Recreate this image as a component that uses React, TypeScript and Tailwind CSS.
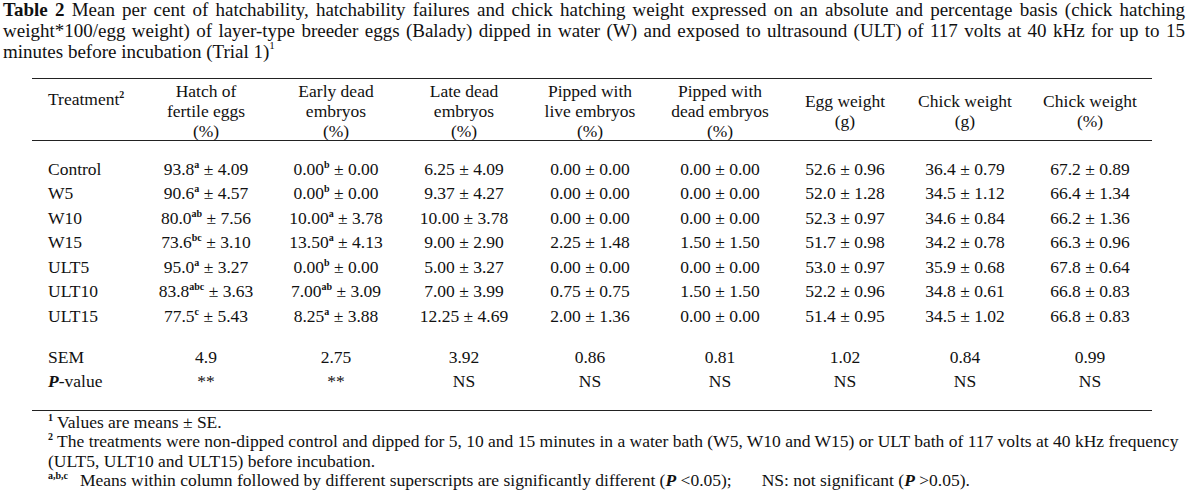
import React from "react";

type Cell = { v: string; s?: string; e: string };

const c = (v: string, e: string, s?: string): Cell => ({ v, e, s });

const rows: { name: string; cells: Cell[] }[] = [
  {
    name: "Control",
    cells: [
      c("93.8", "4.09", "a"),
      c("0.00", "0.00", "b"),
      c("6.25", "4.09"),
      c("0.00", "0.00"),
      c("0.00", "0.00"),
      c("52.6", "0.96"),
      c("36.4", "0.79"),
      c("67.2", "0.89"),
    ],
  },
  {
    name: "W5",
    cells: [
      c("90.6", "4.57", "a"),
      c("0.00", "0.00", "b"),
      c("9.37", "4.27"),
      c("0.00", "0.00"),
      c("0.00", "0.00"),
      c("52.0", "1.28"),
      c("34.5", "1.12"),
      c("66.4", "1.34"),
    ],
  },
  {
    name: "W10",
    cells: [
      c("80.0", "7.56", "ab"),
      c("10.00", "3.78", "a"),
      c("10.00", "3.78"),
      c("0.00", "0.00"),
      c("0.00", "0.00"),
      c("52.3", "0.97"),
      c("34.6", "0.84"),
      c("66.2", "1.36"),
    ],
  },
  {
    name: "W15",
    cells: [
      c("73.6", "3.10", "bc"),
      c("13.50", "4.13", "a"),
      c("9.00", "2.90"),
      c("2.25", "1.48"),
      c("1.50", "1.50"),
      c("51.7", "0.98"),
      c("34.2", "0.78"),
      c("66.3", "0.96"),
    ],
  },
  {
    name: "ULT5",
    cells: [
      c("95.0", "3.27", "a"),
      c("0.00", "0.00", "b"),
      c("5.00", "3.27"),
      c("0.00", "0.00"),
      c("0.00", "0.00"),
      c("53.0", "0.97"),
      c("35.9", "0.68"),
      c("67.8", "0.64"),
    ],
  },
  {
    name: "ULT10",
    cells: [
      c("83.8", "3.63", "abc"),
      c("7.00", "3.09", "ab"),
      c("7.00", "3.99"),
      c("0.75", "0.75"),
      c("1.50", "1.50"),
      c("52.2", "0.96"),
      c("34.8", "0.61"),
      c("66.8", "0.83"),
    ],
  },
  {
    name: "ULT15",
    cells: [
      c("77.5", "5.43", "c"),
      c("8.25", "3.88", "a"),
      c("12.25", "4.69"),
      c("2.00", "1.36"),
      c("0.00", "0.00"),
      c("51.4", "0.95"),
      c("34.5", "1.02"),
      c("66.8", "0.83"),
    ],
  },
];

const sem = ["4.9", "2.75", "3.92", "0.86", "0.81", "1.02", "0.84", "0.99"];
const pValues = ["**", "**", "NS", "NS", "NS", "NS", "NS", "NS"];

// header lines per column, with the top padding that centres them
const headers: { lines: string[]; pt: string }[] = [
  { lines: ["Hatch of", "fertile eggs", "(%)"], pt: "pt-0" },
  { lines: ["Early dead", "embryos", "(%)"], pt: "pt-0" },
  { lines: ["Late dead", "embryos", "(%)"], pt: "pt-0" },
  { lines: ["Pipped with", "live embryos", "(%)"], pt: "pt-0" },
  { lines: ["Pipped with", "dead embryos", "(%)"], pt: "pt-0" },
  { lines: ["Egg weight", "(g)"], pt: "pt-[10px]" },
  { lines: ["Chick weight", "(g)"], pt: "pt-[10px]" },
  { lines: ["Chick weight", "(%)"], pt: "pt-[10px]" },
];

const gridCols =
  "grid grid-cols-[108px_132px_128px_128px_124px_136px_114px_126px_124px]";

const serif = "font-['Liberation_Serif',serif]";

function Sup({ children }: { children: React.ReactNode }) {
  return (
    <sup className="text-[10px] font-bold -top-[7px]">{children}</sup>
  );
}

function DataCell({ cell }: { cell: Cell }) {
  return (
    <div className="text-center whitespace-nowrap">
      {cell.v}
      {cell.s && <Sup>{cell.s}</Sup>} ± {cell.e}
    </div>
  );
}

export default function App() {
  return (
    <div
      className={`w-[1191px] h-[491px] overflow-hidden bg-white text-[#111] ${serif}`}
    >
      {/* caption */}
      <div className={`pl-[3px] pr-[6px] text-[19px] leading-[20.8px] ${serif}`}>
        <div className="text-justify [text-align-last:justify]">
          <b>Table 2</b> Mean per cent of hatchability, hatchability failures and
          chick hatching weight expressed on an absolute and percentage basis
          (chick hatching
        </div>
        <div className="text-justify [text-align-last:justify]">
          weight*100/egg weight) of layer-type breeder eggs (Balady) dipped in
          water (W) and exposed to ultrasound (ULT) of 117 volts at 40 kHz for up
          to 15
        </div>
        <div>
          minutes before incubation (Trial 1)
          <sup className="text-[11px] -top-[9px]">1</sup>
        </div>
      </div>

      {/* table */}
      <div className={`ml-[32px] mt-[15.5px] w-[1120px] text-[17.5px] ${serif}`}>
        <div className="border-t border-[#222]" />
        <div className={`${gridCols} pt-[2px] leading-[20px] h-[61px]`}>
          <div className="pl-[16px] pt-[8px] whitespace-nowrap">
            Treatment<Sup>2</Sup>
          </div>
          {headers.map((h, i) => (
            <div key={i} className={`text-center whitespace-nowrap ${h.pt}`}>
              {h.lines.map((l) => (
                <div key={l}>{l}</div>
              ))}
            </div>
          ))}
        </div>
        <div className="border-t border-[#222]" />

        <div className="pt-[16px] leading-[24.5px]">
          {rows.map((r) => (
            <div key={r.name} className={gridCols}>
              <div className="pl-[16px]">{r.name}</div>
              {r.cells.map((cell, i) => (
                <DataCell key={i} cell={cell} />
              ))}
            </div>
          ))}
        </div>

        <div className="pt-[16.5px] pb-[16px] leading-[24.5px]">
          <div className={gridCols}>
            <div className="pl-[16px]">SEM</div>
            {sem.map((s, i) => (
              <div key={i} className="text-center">
                {s}
              </div>
            ))}
          </div>
          <div className={gridCols}>
            <div className="pl-[16px]">
              <i className="font-bold">P</i>-value
            </div>
            {pValues.map((p, i) => (
              <div key={i} className="text-center">
                {p}
              </div>
            ))}
          </div>
        </div>
        <div className="border-t border-[#222]" />
      </div>

      {/* footnotes */}
      <div
        className={`pt-[2px] pl-[48px] text-[17.5px] leading-[19.5px] whitespace-nowrap ${serif}`}
      >
        <div>
          <Sup>1</Sup> Values are means ± SE.
        </div>
        <div>
          <Sup>2</Sup> The treatments were non-dipped control and dipped for 5,
          10 and 15 minutes in a water bath (W5, W10 and W15) or ULT bath of 117
          volts at 40 kHz frequency
        </div>
        <div>(ULT5, ULT10 and ULT15) before incubation.</div>
        <div>
          <Sup>a,b,c</Sup>
          <span className="ml-[12px]">
            Means within column followed by different superscripts are
            significantly different (<i className="font-bold">P</i> &lt;0.05);
          </span>
          <span className="ml-[30px]">
            NS: not significant (<i className="font-bold">P</i> &gt;0.05).
          </span>
        </div>
      </div>
    </div>
  );
}
